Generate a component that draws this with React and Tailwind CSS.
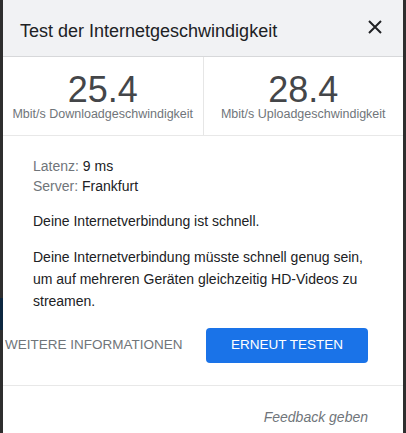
import React from 'react';

const font = { fontFamily: '"Liberation Sans", Arial, sans-serif' };

const Stat = ({ value, label, divider }) => (
    <div className={`flex-1 flex flex-col items-center pt-[16px] pb-[14px] ${divider ? 'border-r border-[#e6e6e6]' : ''}`}>
        <div className="text-[36px] leading-[34px] text-[#444649]">{value}</div>
        <div className="text-[12.5px] leading-[14px] text-[#70757a]">{label}</div>
    </div>
);

const App = () => {
    return (
        <div className="w-[406px] h-[433px] bg-[#2e2e2e] flex overflow-hidden" style={font}>
            {/* page behind the dialog */}
            <div className="w-[3px] flex flex-col">
                <div className="h-[298px]" />
                <div className="h-[32px] bg-[#0d2740]" />
            </div>

            {/* Dialog */}
            <div className="w-[400px] h-full bg-white flex flex-col">
                <div className="h-[57px] bg-[#f1f2f4] border-b border-[#d7d8da] flex items-center justify-between pl-[17px] pr-[21px] pt-[6px]">
                    <h2 className="text-[18px] text-[#202124]">Test der Internetgeschwindigkeit</h2>
                    <button className="text-[#202124] -mt-[9px]">
                        <svg width="14" height="14" viewBox="0 0 14 14" fill="none" stroke="currentColor" strokeWidth="2">
                            <path d="M1 1L13 13M13 1L1 13" />
                        </svg>
                    </button>
                </div>

                <div className="flex border-b border-[#e8e8e8]">
                    <Stat value="25.4" label="Mbit/s Downloadgeschwindigkeit" divider />
                    <Stat value="28.4" label="Mbit/s Uploadgeschwindigkeit" />
                </div>

                <div className="pl-[30px] pr-[28px] pt-[20px] text-[14px] text-[#202124]">
                    <div className="leading-5">
                        <div><span className="text-[#70757a]">Latenz:</span> 9 ms</div>
                        <div><span className="text-[#70757a]">Server:</span> Frankfurt</div>
                    </div>
                    <p className="mt-[14px] leading-[22px]">Deine Internetverbindung ist schnell.</p>
                    <p className="mt-[14px] leading-[22px]">
                        Deine Internetverbindung müsste schnell genug sein, um auf mehreren Geräten gleichzeitig HD-Videos zu streamen.
                    </p>
                </div>

                <div className="flex items-center mt-[16px] pb-[22px] border-b border-[#e8e8e8]">
                    <button className="ml-[2px] text-[13.5px] text-[#70757a] uppercase">Weitere Informationen</button>
                    <button className="ml-auto mr-[35px] w-[162px] h-[35px] rounded bg-[#1a73e8] text-white text-[13.5px] uppercase">
                        Erneut testen
                    </button>
                </div>

                <div className="flex justify-end pr-[35px] pt-[21px]">
                    <a className="text-[14px] italic text-[#70757a]">Feedback geben</a>
                </div>
            </div>
        </div>
    );
};

export default App;
